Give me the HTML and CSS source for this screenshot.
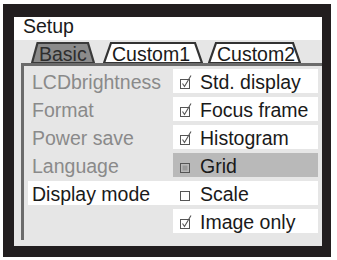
FILE: index.html
```html
<!DOCTYPE html>
<html lang="en">
  <head>
    <meta charset="UTF-8" />
    <meta name="viewport" content="width=device-width, initial-scale=1.0" />
    <title>Setup</title>
    <link rel="stylesheet" href="styles.css">
  </head>
  <body>
    <div class="frame">
      <div class="screen">
        <div class="title">Setup</div>
        <div class="tabs">
          <div class="tab tab-basic active">
            <svg class="tab-shape" width="64" height="21" viewBox="0 0 64 21">
              <polygon points="1,21 6.5,1 57,1 63,21" />
            </svg>
            <span>Basic</span>
          </div>
          <div class="tab tab-custom1">
            <svg class="tab-shape" width="100" height="21" viewBox="0 0 100 21">
              <polygon points="1,21 8,1 92,1 99,21" />
            </svg>
            <span>Custom1</span>
          </div>
          <div class="tab tab-custom2">
            <svg class="tab-shape" width="93" height="21" viewBox="0 0 93 21">
              <polygon points="1,21 8,1 85,1 92,21" />
            </svg>
            <span>Custom2</span>
          </div>
        </div>
        <div class="panel">
          <div class="row">
            <div class="label">LCDbrightness</div>
            <div class="option">
              <svg class="check" width="12" height="16" viewBox="0 0 12 16"><rect x="0.5" y="5.5" width="9" height="9" /><polyline points="2.5,9.5 4.5,12.5 11,1.5" /></svg>
              Std. display
            </div>
          </div>
          <div class="row">
            <div class="label">Format</div>
            <div class="option">
              <svg class="check" width="12" height="16" viewBox="0 0 12 16"><rect x="0.5" y="5.5" width="9" height="9" /><polyline points="2.5,9.5 4.5,12.5 11,1.5" /></svg>
              Focus frame
            </div>
          </div>
          <div class="row">
            <div class="label">Power save</div>
            <div class="option">
              <svg class="check" width="12" height="16" viewBox="0 0 12 16"><rect x="0.5" y="5.5" width="9" height="9" /><polyline points="2.5,9.5 4.5,12.5 11,1.5" /></svg>
              Histogram
            </div>
          </div>
          <div class="row">
            <div class="label">Language</div>
            <div class="option focused">
              <svg class="check" width="12" height="16" viewBox="0 0 12 16"><rect x="0.5" y="5.5" width="9" height="9" /><rect class="fill" x="2.5" y="7.5" width="5" height="5" /></svg>
              Grid
            </div>
          </div>
          <div class="row selected">
            <div class="label">Display mode</div>
            <div class="option">
              <svg class="check" width="12" height="16" viewBox="0 0 12 16"><rect x="0.5" y="5.5" width="9" height="9" /></svg>
              Scale
            </div>
          </div>
          <div class="row">
            <div class="label"></div>
            <div class="option">
              <svg class="check" width="12" height="16" viewBox="0 0 12 16"><rect x="0.5" y="5.5" width="9" height="9" /><polyline points="2.5,9.5 4.5,12.5 11,1.5" /></svg>
              Image only
            </div>
          </div>
        </div>
      </div>
    </div>
  </body>
</html>
```

FILE: styles.css
```css
body {
  margin: 0;
  background: white;
  font-family: "Liberation Sans", Arial, sans-serif;
  font-size: 19.5px;
  color: #1a1a1a;
}
.frame {
  margin: 4px 0 0 3px;
  width: 308px;
  height: 229px;
  border: solid #221e1f;
  border-width: 13px 9px 11px 11px;
  box-shadow: 0 1px 0 #c9c9c9;
}
.screen {
  height: 100%;
  background: #e6e6e6;
}
.title {
  height: 23px;
  line-height: 19px;
  padding-left: 9px;
  box-sizing: border-box;
  background: white;
}
.tabs {
  display: flex;
  height: 23px;
  padding-top: 2px;
  margin-left: 17px;
  box-sizing: border-box;
}
.tab {
  position: relative;
  height: 21px;
  padding: 3px 0 0 9px;
  box-sizing: border-box;
  line-height: 18px;
}
.tab span {
  position: relative;
}
.tab-shape {
  position: absolute;
  left: 0;
  top: 0;
}
.tab-shape polygon {
  fill: white;
  stroke: #333;
  stroke-width: 2.2;
}
.tab-basic {
  width: 64px;
  padding-left: 8px;
  color: #2e2e2e;
}
.tab-basic .tab-shape polygon {
  fill: #8b8b8b;
  stroke: #3a3a3a;
}
.tab-custom1 {
  width: 100px;
  margin-left: 8px;
}
.tab-custom2 {
  width: 93px;
  margin-left: 5px;
}
.panel {
  margin-left: 7px;
  height: 177px;
  padding-top: 3px;
  box-sizing: border-box;
  border-left: 3px solid #6b6b6b;
  border-top: 3px solid #6b6b6b;
  display: flex;
  flex-direction: column;
  gap: 4px;
}
.row {
  display: flex;
  height: 24px;
  margin-left: 4px;
}
.label {
  width: 145px;
  padding: 3px 0 0 4px;
  box-sizing: border-box;
  line-height: 21px;
  color: #8a8a8a;
}
.option {
  width: 145px;
  padding: 3px 0 0 7px;
  box-sizing: border-box;
  line-height: 21px;
  background: white;
  display: flex;
  align-items: flex-start;
}
.row.selected .label {
  background: white;
  color: #1a1a1a;
}
.option.focused {
  background: #b9b9b9;
}
.check {
  flex: none;
  margin: 2px 8px 0 0;
}
.check rect {
  fill: none;
  stroke: #555;
  stroke-width: 1;
}
.check rect.fill {
  fill: #999;
  stroke: none;
}
.check polyline {
  fill: none;
  stroke: #555;
  stroke-width: 1.1;
}
```
